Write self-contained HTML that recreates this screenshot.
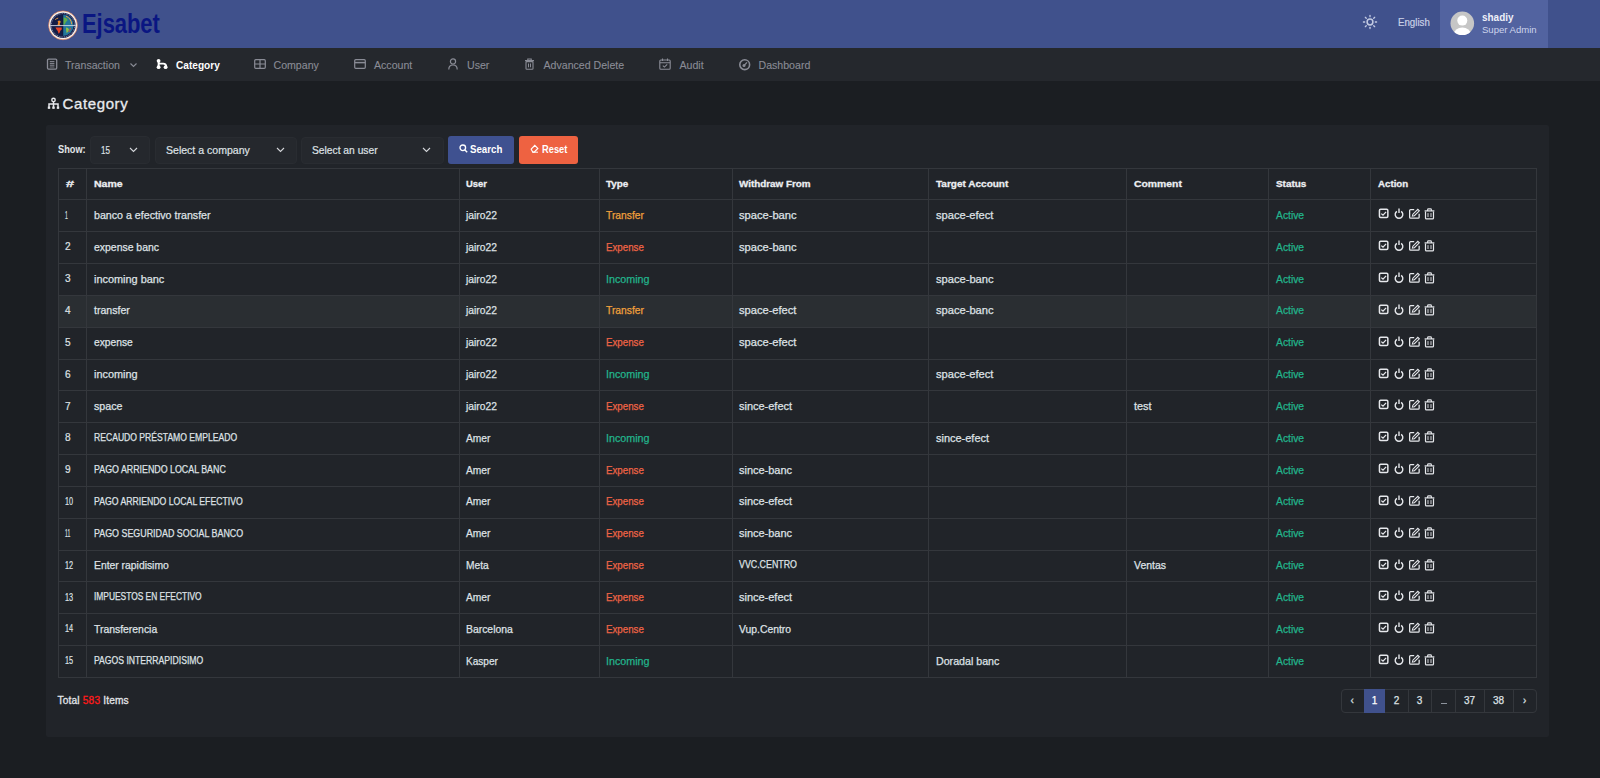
<!DOCTYPE html>
<html><head><meta charset="utf-8">
<style>
*{margin:0;padding:0;box-sizing:border-box}
html,body{width:1600px;height:778px;overflow:hidden;background:#1b1e22;font-family:"Liberation Sans",sans-serif;position:relative}
.t{position:absolute;white-space:nowrap}
.r{position:absolute;display:block}
</style></head><body>
<div class="r" style="left:0px;top:0px;width:1600px;height:48px;background:#40518c;"></div>
<div class="r" style="left:1440px;top:0px;width:108px;height:48px;background:#5263a0;"></div>
<div class="r" style="left:0px;top:48px;width:1600px;height:33px;background:#25282d;"></div>
<svg class="r" style="left:48px;top:10px" width="30" height="31" viewBox="0 0 30 31" overflow="visible">
<circle cx="15" cy="15.3" r="14.4" fill="#f6f1ee"/>
<circle cx="15" cy="15.3" r="14.45" fill="none" stroke="#e07040" stroke-width="0.6"/>
<circle cx="15" cy="15.3" r="12.6" fill="#17204c"/>
<circle cx="15" cy="15.3" r="11.7" fill="none" stroke="#c8cde0" stroke-width="0.7" stroke-dasharray="0.9 0.9"/>
<path d="M15 4.7A10.6 10.6 0 0 0 15 25.9Z" fill="#141d45"/>
<path d="M15 4.7A10.6 10.6 0 0 1 15 25.9Z" fill="#23769c"/>
<path d="M15.4 7.5q2.5 -0.5 4 1.5q0.5 2 -1.5 3q-0.5 2 -2.5 3.5z" fill="#5fae4a"/>
<path d="M18 17.5q2.5 0 3 2q-0.5 2.5 -2.5 3.5q-0.5 -2.5 -0.5 -5.5z" fill="#8cc04a"/>
<path d="M18 6.2q5 1.8 5.8 8.2" fill="none" stroke="#f0a040" stroke-width="1"/>
<path d="M22.5 18q-0.5 2.5 -1.8 4" fill="none" stroke="#e84a2a" stroke-width="0.9"/>
<path d="M9.6 11.5q1.2 -1.6 2.8 -0.6q0.8 1.2 -0.4 2.2q-1 1 0.4 2.2l-2.6 0.3q-0.6 -1.6 0.5 -2.6z" fill="#f08a2a"/>
<path d="M7.2 9.6q1.5 -1.2 3 -1.5" fill="none" stroke="#f09a3a" stroke-width="0.9"/>
<path d="M7.5 17.5h6.2v2q-1.5 0.5 -1.8 2.5q-0.5 1.5 -1.5 1.5q-0.2 -2 -1 -3q-1.4 -1.4 -1.9 -3z" fill="#e8452a"/>
<line x1="14.9" y1="4.7" x2="14.9" y2="25.9" stroke="#10183a" stroke-width="0.6"/>
<line x1="2.2" y1="15.6" x2="27.8" y2="15.6" stroke="#d6dae6" stroke-width="0.9"/>
</svg>
<div class="t" style="left:81.5px;top:6.5px;font-size:27px;line-height:34px;color:#0a1682;font-weight:bold;transform:scaleX(0.815);transform-origin:0 0;letter-spacing:-0.1px">Ejsabet</div>
<svg class="r" style="left:1361.7px;top:14.2px" width="16" height="16" viewBox="0 0 16 16" overflow="visible"><circle cx="8" cy="8" r="2.9" fill="none" stroke="#c3cbe3" stroke-width="1.5"/><line x1="13.30" y1="8.00" x2="14.60" y2="8.00" stroke="#c3cbe3" stroke-width="1.3" stroke-linecap="round"/><line x1="11.75" y1="11.75" x2="12.67" y2="12.67" stroke="#c3cbe3" stroke-width="1.3" stroke-linecap="round"/><line x1="8.00" y1="13.30" x2="8.00" y2="14.60" stroke="#c3cbe3" stroke-width="1.3" stroke-linecap="round"/><line x1="4.25" y1="11.75" x2="3.33" y2="12.67" stroke="#c3cbe3" stroke-width="1.3" stroke-linecap="round"/><line x1="2.70" y1="8.00" x2="1.40" y2="8.00" stroke="#c3cbe3" stroke-width="1.3" stroke-linecap="round"/><line x1="4.25" y1="4.25" x2="3.33" y2="3.33" stroke="#c3cbe3" stroke-width="1.3" stroke-linecap="round"/><line x1="8.00" y1="2.70" x2="8.00" y2="1.40" stroke="#c3cbe3" stroke-width="1.3" stroke-linecap="round"/><line x1="11.75" y1="4.25" x2="12.67" y2="3.33" stroke="#c3cbe3" stroke-width="1.3" stroke-linecap="round"/></svg>
<div class="t" style="left:1397.9px;top:16.73px;font-size:10px;line-height:12px;color:#c9d0e6;font-weight:normal;transform:scaleX(0.9695);transform-origin:0 0;-webkit-text-stroke:0.2px #c9d0e6">English</div>
<svg class="r" style="left:1450px;top:11px" width="25" height="25" viewBox="0 0 25 25" overflow="visible"><defs><clipPath id="av"><circle cx="12.3" cy="12.3" r="11.8"/></clipPath></defs>
<circle cx="12.3" cy="12.3" r="11.8" fill="#c6c6c6"/>
<g clip-path="url(#av)"><circle cx="12.3" cy="9.6" r="5" fill="#fff"/><ellipse cx="12.3" cy="23.5" rx="8.5" ry="7" fill="#fff"/></g></svg>
<div class="t" style="left:1482.4px;top:11.54px;font-size:10px;line-height:12px;color:#eef0f8;font-weight:bold;transform:scaleX(0.9943);transform-origin:0 0;">shadiy</div>
<div class="t" style="left:1482.4px;top:23.78px;font-size:9.3px;line-height:12px;color:#cdd4ec;font-weight:normal;transform:scaleX(1.0272);transform-origin:0 0;">Super Admin</div>
<svg class="r" style="left:46px;top:58px" width="12" height="12" viewBox="0 0 12 12" overflow="visible"><rect x="1.5" y="1.1" width="9.2" height="10" rx="1" fill="none" stroke="#8a8c96" stroke-width="1.3"/><path d="M3.8 3.6h4.6M3.8 5.4h4.6M3.8 7.2h4.6" stroke="#8a8c96" stroke-width="1"/><path d="M3.8 9h4.6" stroke="#8a8c96" stroke-width="0.8"/></svg>
<div class="t" style="left:65px;top:59.23px;font-size:10.6px;line-height:13px;color:#8a8c96;font-weight:normal;-webkit-text-stroke:0.1px #8a8c96">Transaction</div>
<svg class="r" style="left:129px;top:62px" width="9" height="6" viewBox="0 0 9 6" overflow="visible"><path d="M1.5 1.5l3 3 3-3" fill="none" stroke="#8a8c96" stroke-width="1.1"/></svg>
<svg class="r" style="left:155px;top:58px" width="14" height="12" viewBox="0 0 14 12" overflow="visible"><circle cx="3.6" cy="2.8" r="1.9" fill="#fff"/><circle cx="3.6" cy="9.2" r="1.9" fill="#fff"/><circle cx="10.6" cy="9.2" r="1.9" fill="#fff"/><path d="M3.6 2.8v6.4M3.6 5.6h4.6q3 0 3 3v0.6" fill="none" stroke="#fff" stroke-width="1.9"/></svg>
<div class="t" style="left:176px;top:59.40px;font-size:10.1px;line-height:13px;color:#ffffff;font-weight:bold;">Category</div>
<svg class="r" style="left:254px;top:59px" width="12" height="10" viewBox="0 0 12 10" overflow="visible"><rect x="0.7" y="0.7" width="10.6" height="8.6" rx="1" fill="none" stroke="#8a8c96" stroke-width="1.2"/><path d="M6 0.7v8.6M0.7 5h10.6" stroke="#8a8c96" stroke-width="1.2"/></svg>
<div class="t" style="left:273.5px;top:59.23px;font-size:10.6px;line-height:13px;color:#8a8c96;font-weight:normal;-webkit-text-stroke:0.1px #8a8c96">Company</div>
<svg class="r" style="left:354px;top:59px" width="12" height="10" viewBox="0 0 12 10" overflow="visible"><rect x="0.7" y="0.7" width="10.6" height="8.6" rx="1" fill="none" stroke="#8a8c96" stroke-width="1.2"/><path d="M0.7 3.6h10.6" stroke="#8a8c96" stroke-width="1.5"/></svg>
<div class="t" style="left:374px;top:59.23px;font-size:10.6px;line-height:13px;color:#8a8c96;font-weight:normal;-webkit-text-stroke:0.1px #8a8c96">Account</div>
<svg class="r" style="left:448px;top:58px" width="10" height="12" viewBox="0 0 10 12" overflow="visible"><circle cx="5" cy="3.4" r="2.6" fill="none" stroke="#8a8c96" stroke-width="1.2"/><path d="M0.8 11.4q0-4.4 4.2-4.4t4.2 4.4" fill="none" stroke="#8a8c96" stroke-width="1.2"/></svg>
<div class="t" style="left:467px;top:59.23px;font-size:10.6px;line-height:13px;color:#8a8c96;font-weight:normal;-webkit-text-stroke:0.1px #8a8c96">User</div>
<svg class="r" style="left:524px;top:58px" width="11" height="12" viewBox="0 0 11 12" overflow="visible"><path d="M1 2.6h9M3.8 2.6v-1.6h3.4v1.6" fill="none" stroke="#8a8c96" stroke-width="1.1"/><rect x="2" y="3.6" width="7" height="7.6" rx="0.8" fill="none" stroke="#8a8c96" stroke-width="1.1"/><path d="M4.5 5.5v3.8M6.5 5.5v3.8" stroke="#8a8c96" stroke-width="1"/></svg>
<div class="t" style="left:543.5px;top:59.23px;font-size:10.6px;line-height:13px;color:#8a8c96;font-weight:normal;-webkit-text-stroke:0.1px #8a8c96">Advanced Delete</div>
<svg class="r" style="left:659px;top:58px" width="12" height="12" viewBox="0 0 12 12" overflow="visible"><rect x="0.8" y="2" width="10.4" height="9.2" rx="1" fill="none" stroke="#8a8c96" stroke-width="1.1"/><path d="M0.8 4.8h10.4M3.5 0.5v2.6M8.5 0.5v2.6" stroke="#8a8c96" stroke-width="1.1"/><path d="M3.8 7.6l1.6 1.5 2.8-2.8" fill="none" stroke="#8a8c96" stroke-width="1.1"/></svg>
<div class="t" style="left:679.5px;top:59.23px;font-size:10.6px;line-height:13px;color:#8a8c96;font-weight:normal;-webkit-text-stroke:0.1px #8a8c96">Audit</div>
<svg class="r" style="left:738.5px;top:58.5px" width="12" height="12" viewBox="0 0 12 12" overflow="visible"><circle cx="5.7" cy="5.7" r="4.9" fill="none" stroke="#8a8c96" stroke-width="1.6"/><circle cx="5" cy="6.6" r="1.5" fill="#8a8c96"/><path d="M5.2 6.4l2.8-3" stroke="#8a8c96" stroke-width="1.3"/></svg>
<div class="t" style="left:758.5px;top:59.23px;font-size:10.6px;line-height:13px;color:#8a8c96;font-weight:normal;-webkit-text-stroke:0.1px #8a8c96">Dashboard</div>
<svg class="r" style="left:47px;top:96px" width="13" height="14" viewBox="0 0 13 14" overflow="visible"><circle cx="6.5" cy="3.9" r="1.7" fill="none" stroke="#e6e8ec" stroke-width="1.4"/><path d="M6.5 5.6v2M2 12.4v-4.5h9v4.5M6.5 7.9v4.5" fill="none" stroke="#e6e8ec" stroke-width="1.5"/><rect x="0.8" y="10.6" width="2.4" height="2.2" fill="#e6e8ec"/><rect x="5.3" y="10.6" width="2.4" height="2.2" fill="#e6e8ec"/><rect x="9.8" y="10.6" width="2.4" height="2.2" fill="#e6e8ec"/></svg>
<div class="t" style="left:62.5px;top:94.20px;font-size:15px;line-height:19px;color:#e8eaee;font-weight:normal;letter-spacing:0.62px;-webkit-text-stroke:0.3px #e8eaee">Category</div>
<div class="r" style="left:46px;top:125px;width:1503px;height:612px;background:#212429;border-radius:2px"></div>
<div class="t" style="left:57.8px;top:144.13px;font-size:10px;line-height:12px;color:#e2e4e8;font-weight:bold;transform:scaleX(0.9200);transform-origin:0 0;">Show:</div>
<div class="r" style="left:90px;top:136px;width:59.5px;height:27.5px;background:#25282d;border-radius:4px;border:1px solid #292c31;box-sizing:border-box"></div>
<div class="t" style="left:100.9px;top:142.79px;font-size:11px;line-height:14px;color:#dfe1e5;font-weight:normal;transform:scaleX(0.7276);transform-origin:0 0;-webkit-text-stroke:0.2px #dfe1e5">15</div>
<svg class="r" style="left:129px;top:147px" width="9" height="6" viewBox="0 0 9 6" overflow="visible"><path d="M1 1l3.5 3.5 3.5-3.5" fill="none" stroke="#d4d6da" stroke-width="1.1"/></svg>
<div class="r" style="left:155px;top:137px;width:142px;height:26.5px;background:#25282d;border-radius:4px;border:1px solid #292c31;box-sizing:border-box"></div>
<div class="t" style="left:165.7px;top:142.79px;font-size:11px;line-height:14px;color:#dfe1e5;font-weight:normal;transform:scaleX(0.9584);transform-origin:0 0;-webkit-text-stroke:0.2px #dfe1e5">Select a company</div>
<svg class="r" style="left:276px;top:147px" width="9" height="6" viewBox="0 0 9 6" overflow="visible"><path d="M1 1l3.5 3.5 3.5-3.5" fill="none" stroke="#d4d6da" stroke-width="1.1"/></svg>
<div class="r" style="left:301px;top:137px;width:143px;height:26.5px;background:#25282d;border-radius:4px;border:1px solid #292c31;box-sizing:border-box"></div>
<div class="t" style="left:312.2px;top:142.79px;font-size:11px;line-height:14px;color:#dfe1e5;font-weight:normal;transform:scaleX(0.9328);transform-origin:0 0;-webkit-text-stroke:0.2px #dfe1e5">Select an user</div>
<svg class="r" style="left:421.5px;top:147px" width="9" height="6" viewBox="0 0 9 6" overflow="visible"><path d="M1 1l3.5 3.5 3.5-3.5" fill="none" stroke="#d4d6da" stroke-width="1.1"/></svg>
<div class="r" style="left:448px;top:136px;width:66px;height:27.5px;background:#3f5190;border-radius:3px"></div>
<svg class="r" style="left:458.5px;top:143.5px" width="9" height="9" viewBox="0 0 9 9" overflow="visible"><circle cx="3.8" cy="3.8" r="2.8" fill="none" stroke="#fff" stroke-width="1.3"/><path d="M5.9 5.9l2.3 2.3" stroke="#fff" stroke-width="1.4"/></svg>
<div class="t" style="left:469.9px;top:144.13px;font-size:10px;line-height:12px;color:#ffffff;font-weight:bold;transform:scaleX(0.9685);transform-origin:0 0;">Search</div>
<div class="r" style="left:519px;top:136px;width:59px;height:27.5px;background:#ee6241;border-radius:3px"></div>
<svg class="r" style="left:530px;top:143.5px" width="9" height="9" viewBox="0 0 9 9" overflow="visible"><path d="M1.2 5.2l3.6-3.8l3 3l-3.6 3.8h-1.4z" fill="none" stroke="#fff" stroke-width="1.2"/><path d="M2.5 8.2h5.5" stroke="#fff" stroke-width="1"/></svg>
<div class="t" style="left:541.5px;top:144.13px;font-size:10px;line-height:12px;color:#ffffff;font-weight:bold;transform:scaleX(0.9325);transform-origin:0 0;">Reset</div>
<div class="r" style="left:58px;top:295px;width:1478px;height:32px;background:#2a2e32;"></div>
<div class="r" style="left:58px;top:168px;width:1479px;height:1px;background:#34373c;"></div>
<div class="r" style="left:58px;top:199px;width:1479px;height:1px;background:#34373c;"></div>
<div class="r" style="left:58px;top:231px;width:1479px;height:1px;background:#34373c;"></div>
<div class="r" style="left:58px;top:263px;width:1479px;height:1px;background:#34373c;"></div>
<div class="r" style="left:58px;top:295px;width:1479px;height:1px;background:#34373c;"></div>
<div class="r" style="left:58px;top:327px;width:1479px;height:1px;background:#34373c;"></div>
<div class="r" style="left:58px;top:359px;width:1479px;height:1px;background:#34373c;"></div>
<div class="r" style="left:58px;top:390px;width:1479px;height:1px;background:#34373c;"></div>
<div class="r" style="left:58px;top:422px;width:1479px;height:1px;background:#34373c;"></div>
<div class="r" style="left:58px;top:454px;width:1479px;height:1px;background:#34373c;"></div>
<div class="r" style="left:58px;top:486px;width:1479px;height:1px;background:#34373c;"></div>
<div class="r" style="left:58px;top:518px;width:1479px;height:1px;background:#34373c;"></div>
<div class="r" style="left:58px;top:550px;width:1479px;height:1px;background:#34373c;"></div>
<div class="r" style="left:58px;top:581px;width:1479px;height:1px;background:#34373c;"></div>
<div class="r" style="left:58px;top:613px;width:1479px;height:1px;background:#34373c;"></div>
<div class="r" style="left:58px;top:645px;width:1479px;height:1px;background:#34373c;"></div>
<div class="r" style="left:58px;top:677px;width:1479px;height:1px;background:#34373c;"></div>
<div class="r" style="left:58px;top:168px;width:1px;height:510px;background:#34373c;"></div>
<div class="r" style="left:86px;top:168px;width:1px;height:510px;background:#34373c;"></div>
<div class="r" style="left:459px;top:168px;width:1px;height:510px;background:#34373c;"></div>
<div class="r" style="left:599px;top:168px;width:1px;height:510px;background:#34373c;"></div>
<div class="r" style="left:732px;top:168px;width:1px;height:510px;background:#34373c;"></div>
<div class="r" style="left:928px;top:168px;width:1px;height:510px;background:#34373c;"></div>
<div class="r" style="left:1126px;top:168px;width:1px;height:510px;background:#34373c;"></div>
<div class="r" style="left:1268px;top:168px;width:1px;height:510px;background:#34373c;"></div>
<div class="r" style="left:1370px;top:168px;width:1px;height:510px;background:#34373c;"></div>
<div class="r" style="left:1536px;top:168px;width:1px;height:510px;background:#34373c;"></div>
<div class="t" style="left:65.5px;top:177.57px;font-size:9.9px;line-height:12px;color:#eceef2;font-weight:bold;transform:scaleX(1.4716);transform-origin:0 0;-webkit-text-stroke:0.3px #eceef2">#</div>
<div class="t" style="left:93.9px;top:177.57px;font-size:9.9px;line-height:12px;color:#eceef2;font-weight:bold;transform:scaleX(1.0661);transform-origin:0 0;-webkit-text-stroke:0.3px #eceef2">Name</div>
<div class="t" style="left:466.4px;top:177.57px;font-size:9.9px;line-height:12px;color:#eceef2;font-weight:bold;transform:scaleX(0.9538);transform-origin:0 0;-webkit-text-stroke:0.3px #eceef2">User</div>
<div class="t" style="left:606.4px;top:177.57px;font-size:9.9px;line-height:12px;color:#eceef2;font-weight:bold;transform:scaleX(1.0012);transform-origin:0 0;-webkit-text-stroke:0.3px #eceef2">Type</div>
<div class="t" style="left:739.2px;top:177.57px;font-size:9.9px;line-height:12px;color:#eceef2;font-weight:bold;transform:scaleX(0.9977);transform-origin:0 0;-webkit-text-stroke:0.3px #eceef2">Withdraw From</div>
<div class="t" style="left:936.0px;top:177.57px;font-size:9.9px;line-height:12px;color:#eceef2;font-weight:bold;transform:scaleX(1.0139);transform-origin:0 0;-webkit-text-stroke:0.3px #eceef2">Target Account</div>
<div class="t" style="left:1134.0px;top:177.57px;font-size:9.9px;line-height:12px;color:#eceef2;font-weight:bold;transform:scaleX(1.0515);transform-origin:0 0;-webkit-text-stroke:0.3px #eceef2">Comment</div>
<div class="t" style="left:1275.6px;top:177.57px;font-size:9.9px;line-height:12px;color:#eceef2;font-weight:bold;transform:scaleX(1.0048);transform-origin:0 0;-webkit-text-stroke:0.3px #eceef2">Status</div>
<div class="t" style="left:1377.5px;top:177.57px;font-size:9.9px;line-height:12px;color:#eceef2;font-weight:bold;transform:scaleX(0.9822);transform-origin:0 0;-webkit-text-stroke:0.3px #eceef2">Action</div>
<div class="t" style="left:65.4px;top:208.66px;font-size:10.5px;line-height:13px;color:#dfe1e5;font-weight:normal;transform:scaleX(0.4796);transform-origin:0 0;-webkit-text-stroke:0.2px #dfe1e5">1</div>
<div class="t" style="left:94.2px;top:207.99px;font-size:11px;line-height:14px;color:#dfe1e5;font-weight:normal;transform:scaleX(0.9679);transform-origin:0 0;-webkit-text-stroke:0.25px #dfe1e5">banco a efectivo transfer</div>
<div class="t" style="left:466.45685497191937px;top:207.99px;font-size:11px;line-height:14px;color:#dfe1e5;font-weight:normal;transform:scaleX(0.9340);transform-origin:0 0;-webkit-text-stroke:0.25px #dfe1e5">jairo22</div>
<div class="t" style="left:606.3px;top:207.99px;font-size:11px;line-height:14px;color:#f0a03c;font-weight:normal;transform:scaleX(0.9347);transform-origin:0 0;-webkit-text-stroke:0.25px #f0a03c">Transfer</div>
<div class="t" style="left:738.9px;top:207.99px;font-size:11px;line-height:14px;color:#dfe1e5;font-weight:normal;transform:scaleX(1.0111);transform-origin:0 0;-webkit-text-stroke:0.25px #dfe1e5">space-banc</div>
<div class="t" style="left:936.0px;top:207.99px;font-size:11px;line-height:14px;color:#dfe1e5;font-weight:normal;transform:scaleX(1.0095);transform-origin:0 0;-webkit-text-stroke:0.25px #dfe1e5">space-efect</div>
<div class="t" style="left:1275.6px;top:207.99px;font-size:11px;line-height:14px;color:#22b48c;font-weight:normal;transform:scaleX(0.9381);transform-origin:0 0;-webkit-text-stroke:0.25px #22b48c">Active</div>
<svg class="r" style="left:1378px;top:208.4px" width="60" height="13" viewBox="0 0 60 13" overflow="visible"><rect x="1.45" y="1.2" width="8.4" height="8.2" rx="1.2" fill="none" stroke="#e6e8ec" stroke-width="1.5"/>
<path d="M3.3 5.6l1.7 1.6 3.1-3.3" fill="none" stroke="#e6e8ec" stroke-width="1.3"/>
<path d="M18.9 3.3A3.8 3.8 0 1 0 23.1 3.3" fill="none" stroke="#e6e8ec" stroke-width="1.4"/><path d="M21 0.6V5.1" stroke="#e6e8ec" stroke-width="1.4"/>
<path d="M36.2 1.65H32.6Q31.65 1.65 31.65 2.6V9.25Q31.65 10.2 32.6 10.2H40.2Q41.15 10.2 41.15 9.25V5.8" fill="none" stroke="#e6e8ec" stroke-width="1.3"/>
<path d="M34.4 8.1L34.9 6.2L39.8 1.3L41.3 2.8L36.4 7.7Z" fill="none" stroke="#e6e8ec" stroke-width="1.1"/>
<path d="M46.6 2.9H56.35" stroke="#e6e8ec" stroke-width="1.2"/><path d="M49.6 2.9V1.8Q49.6 0.9 50.5 0.9H52.5Q53.4 0.9 53.4 1.8V2.9" fill="none" stroke="#e6e8ec" stroke-width="1.1"/>
<path d="M47.5 3.4V9.9Q47.5 10.9 48.5 10.9H54.5Q55.5 10.9 55.5 9.9V3.4" fill="none" stroke="#e6e8ec" stroke-width="1.2"/><path d="M50 5.1V9M53 5.1V9" stroke="#e6e8ec" stroke-width="0.9"/></svg>
<div class="t" style="left:65.4px;top:240.49px;font-size:10.5px;line-height:13px;color:#dfe1e5;font-weight:normal;transform:scaleX(0.9592);transform-origin:0 0;-webkit-text-stroke:0.2px #dfe1e5">2</div>
<div class="t" style="left:94.2px;top:239.82px;font-size:11px;line-height:14px;color:#dfe1e5;font-weight:normal;transform:scaleX(0.9489);transform-origin:0 0;-webkit-text-stroke:0.25px #dfe1e5">expense banc</div>
<div class="t" style="left:466.45685497191937px;top:239.82px;font-size:11px;line-height:14px;color:#dfe1e5;font-weight:normal;transform:scaleX(0.9340);transform-origin:0 0;-webkit-text-stroke:0.25px #dfe1e5">jairo22</div>
<div class="t" style="left:606.3px;top:239.82px;font-size:11px;line-height:14px;color:#ef6446;font-weight:normal;transform:scaleX(0.8853);transform-origin:0 0;-webkit-text-stroke:0.25px #ef6446">Expense</div>
<div class="t" style="left:738.9px;top:239.82px;font-size:11px;line-height:14px;color:#dfe1e5;font-weight:normal;transform:scaleX(1.0111);transform-origin:0 0;-webkit-text-stroke:0.25px #dfe1e5">space-banc</div>
<div class="t" style="left:1275.6px;top:239.82px;font-size:11px;line-height:14px;color:#22b48c;font-weight:normal;transform:scaleX(0.9381);transform-origin:0 0;-webkit-text-stroke:0.25px #22b48c">Active</div>
<svg class="r" style="left:1378px;top:240.23px" width="60" height="13" viewBox="0 0 60 13" overflow="visible"><rect x="1.45" y="1.2" width="8.4" height="8.2" rx="1.2" fill="none" stroke="#e6e8ec" stroke-width="1.5"/>
<path d="M3.3 5.6l1.7 1.6 3.1-3.3" fill="none" stroke="#e6e8ec" stroke-width="1.3"/>
<path d="M18.9 3.3A3.8 3.8 0 1 0 23.1 3.3" fill="none" stroke="#e6e8ec" stroke-width="1.4"/><path d="M21 0.6V5.1" stroke="#e6e8ec" stroke-width="1.4"/>
<path d="M36.2 1.65H32.6Q31.65 1.65 31.65 2.6V9.25Q31.65 10.2 32.6 10.2H40.2Q41.15 10.2 41.15 9.25V5.8" fill="none" stroke="#e6e8ec" stroke-width="1.3"/>
<path d="M34.4 8.1L34.9 6.2L39.8 1.3L41.3 2.8L36.4 7.7Z" fill="none" stroke="#e6e8ec" stroke-width="1.1"/>
<path d="M46.6 2.9H56.35" stroke="#e6e8ec" stroke-width="1.2"/><path d="M49.6 2.9V1.8Q49.6 0.9 50.5 0.9H52.5Q53.4 0.9 53.4 1.8V2.9" fill="none" stroke="#e6e8ec" stroke-width="1.1"/>
<path d="M47.5 3.4V9.9Q47.5 10.9 48.5 10.9H54.5Q55.5 10.9 55.5 9.9V3.4" fill="none" stroke="#e6e8ec" stroke-width="1.2"/><path d="M50 5.1V9M53 5.1V9" stroke="#e6e8ec" stroke-width="0.9"/></svg>
<div class="t" style="left:65.4px;top:272.32px;font-size:10.5px;line-height:13px;color:#dfe1e5;font-weight:normal;transform:scaleX(0.9592);transform-origin:0 0;-webkit-text-stroke:0.2px #dfe1e5">3</div>
<div class="t" style="left:94.2px;top:271.65px;font-size:11px;line-height:14px;color:#dfe1e5;font-weight:normal;transform:scaleX(0.9911);transform-origin:0 0;-webkit-text-stroke:0.25px #dfe1e5">incoming banc</div>
<div class="t" style="left:466.45685497191937px;top:271.65px;font-size:11px;line-height:14px;color:#dfe1e5;font-weight:normal;transform:scaleX(0.9340);transform-origin:0 0;-webkit-text-stroke:0.25px #dfe1e5">jairo22</div>
<div class="t" style="left:606.3px;top:271.65px;font-size:11px;line-height:14px;color:#22b48c;font-weight:normal;transform:scaleX(0.9745);transform-origin:0 0;-webkit-text-stroke:0.25px #22b48c">Incoming</div>
<div class="t" style="left:936.0px;top:271.65px;font-size:11px;line-height:14px;color:#dfe1e5;font-weight:normal;transform:scaleX(1.0111);transform-origin:0 0;-webkit-text-stroke:0.25px #dfe1e5">space-banc</div>
<div class="t" style="left:1275.6px;top:271.65px;font-size:11px;line-height:14px;color:#22b48c;font-weight:normal;transform:scaleX(0.9381);transform-origin:0 0;-webkit-text-stroke:0.25px #22b48c">Active</div>
<svg class="r" style="left:1378px;top:272.06px" width="60" height="13" viewBox="0 0 60 13" overflow="visible"><rect x="1.45" y="1.2" width="8.4" height="8.2" rx="1.2" fill="none" stroke="#e6e8ec" stroke-width="1.5"/>
<path d="M3.3 5.6l1.7 1.6 3.1-3.3" fill="none" stroke="#e6e8ec" stroke-width="1.3"/>
<path d="M18.9 3.3A3.8 3.8 0 1 0 23.1 3.3" fill="none" stroke="#e6e8ec" stroke-width="1.4"/><path d="M21 0.6V5.1" stroke="#e6e8ec" stroke-width="1.4"/>
<path d="M36.2 1.65H32.6Q31.65 1.65 31.65 2.6V9.25Q31.65 10.2 32.6 10.2H40.2Q41.15 10.2 41.15 9.25V5.8" fill="none" stroke="#e6e8ec" stroke-width="1.3"/>
<path d="M34.4 8.1L34.9 6.2L39.8 1.3L41.3 2.8L36.4 7.7Z" fill="none" stroke="#e6e8ec" stroke-width="1.1"/>
<path d="M46.6 2.9H56.35" stroke="#e6e8ec" stroke-width="1.2"/><path d="M49.6 2.9V1.8Q49.6 0.9 50.5 0.9H52.5Q53.4 0.9 53.4 1.8V2.9" fill="none" stroke="#e6e8ec" stroke-width="1.1"/>
<path d="M47.5 3.4V9.9Q47.5 10.9 48.5 10.9H54.5Q55.5 10.9 55.5 9.9V3.4" fill="none" stroke="#e6e8ec" stroke-width="1.2"/><path d="M50 5.1V9M53 5.1V9" stroke="#e6e8ec" stroke-width="0.9"/></svg>
<div class="t" style="left:65.4px;top:304.15px;font-size:10.5px;line-height:13px;color:#dfe1e5;font-weight:normal;transform:scaleX(0.9592);transform-origin:0 0;-webkit-text-stroke:0.2px #dfe1e5">4</div>
<div class="t" style="left:94.2px;top:303.48px;font-size:11px;line-height:14px;color:#dfe1e5;font-weight:normal;transform:scaleX(0.9600);transform-origin:0 0;-webkit-text-stroke:0.25px #dfe1e5">transfer</div>
<div class="t" style="left:466.45685497191937px;top:303.48px;font-size:11px;line-height:14px;color:#dfe1e5;font-weight:normal;transform:scaleX(0.9340);transform-origin:0 0;-webkit-text-stroke:0.25px #dfe1e5">jairo22</div>
<div class="t" style="left:606.3px;top:303.48px;font-size:11px;line-height:14px;color:#f0a03c;font-weight:normal;transform:scaleX(0.9347);transform-origin:0 0;-webkit-text-stroke:0.25px #f0a03c">Transfer</div>
<div class="t" style="left:738.9px;top:303.48px;font-size:11px;line-height:14px;color:#dfe1e5;font-weight:normal;transform:scaleX(1.0095);transform-origin:0 0;-webkit-text-stroke:0.25px #dfe1e5">space-efect</div>
<div class="t" style="left:936.0px;top:303.48px;font-size:11px;line-height:14px;color:#dfe1e5;font-weight:normal;transform:scaleX(1.0111);transform-origin:0 0;-webkit-text-stroke:0.25px #dfe1e5">space-banc</div>
<div class="t" style="left:1275.6px;top:303.48px;font-size:11px;line-height:14px;color:#22b48c;font-weight:normal;transform:scaleX(0.9381);transform-origin:0 0;-webkit-text-stroke:0.25px #22b48c">Active</div>
<svg class="r" style="left:1378px;top:303.89px" width="60" height="13" viewBox="0 0 60 13" overflow="visible"><rect x="1.45" y="1.2" width="8.4" height="8.2" rx="1.2" fill="none" stroke="#e6e8ec" stroke-width="1.5"/>
<path d="M3.3 5.6l1.7 1.6 3.1-3.3" fill="none" stroke="#e6e8ec" stroke-width="1.3"/>
<path d="M18.9 3.3A3.8 3.8 0 1 0 23.1 3.3" fill="none" stroke="#e6e8ec" stroke-width="1.4"/><path d="M21 0.6V5.1" stroke="#e6e8ec" stroke-width="1.4"/>
<path d="M36.2 1.65H32.6Q31.65 1.65 31.65 2.6V9.25Q31.65 10.2 32.6 10.2H40.2Q41.15 10.2 41.15 9.25V5.8" fill="none" stroke="#e6e8ec" stroke-width="1.3"/>
<path d="M34.4 8.1L34.9 6.2L39.8 1.3L41.3 2.8L36.4 7.7Z" fill="none" stroke="#e6e8ec" stroke-width="1.1"/>
<path d="M46.6 2.9H56.35" stroke="#e6e8ec" stroke-width="1.2"/><path d="M49.6 2.9V1.8Q49.6 0.9 50.5 0.9H52.5Q53.4 0.9 53.4 1.8V2.9" fill="none" stroke="#e6e8ec" stroke-width="1.1"/>
<path d="M47.5 3.4V9.9Q47.5 10.9 48.5 10.9H54.5Q55.5 10.9 55.5 9.9V3.4" fill="none" stroke="#e6e8ec" stroke-width="1.2"/><path d="M50 5.1V9M53 5.1V9" stroke="#e6e8ec" stroke-width="0.9"/></svg>
<div class="t" style="left:65.4px;top:335.98px;font-size:10.5px;line-height:13px;color:#dfe1e5;font-weight:normal;transform:scaleX(0.9592);transform-origin:0 0;-webkit-text-stroke:0.2px #dfe1e5">5</div>
<div class="t" style="left:94.2px;top:335.31px;font-size:11px;line-height:14px;color:#dfe1e5;font-weight:normal;transform:scaleX(0.9305);transform-origin:0 0;-webkit-text-stroke:0.25px #dfe1e5">expense</div>
<div class="t" style="left:466.45685497191937px;top:335.31px;font-size:11px;line-height:14px;color:#dfe1e5;font-weight:normal;transform:scaleX(0.9340);transform-origin:0 0;-webkit-text-stroke:0.25px #dfe1e5">jairo22</div>
<div class="t" style="left:606.3px;top:335.31px;font-size:11px;line-height:14px;color:#ef6446;font-weight:normal;transform:scaleX(0.8853);transform-origin:0 0;-webkit-text-stroke:0.25px #ef6446">Expense</div>
<div class="t" style="left:738.9px;top:335.31px;font-size:11px;line-height:14px;color:#dfe1e5;font-weight:normal;transform:scaleX(1.0095);transform-origin:0 0;-webkit-text-stroke:0.25px #dfe1e5">space-efect</div>
<div class="t" style="left:1275.6px;top:335.31px;font-size:11px;line-height:14px;color:#22b48c;font-weight:normal;transform:scaleX(0.9381);transform-origin:0 0;-webkit-text-stroke:0.25px #22b48c">Active</div>
<svg class="r" style="left:1378px;top:335.72px" width="60" height="13" viewBox="0 0 60 13" overflow="visible"><rect x="1.45" y="1.2" width="8.4" height="8.2" rx="1.2" fill="none" stroke="#e6e8ec" stroke-width="1.5"/>
<path d="M3.3 5.6l1.7 1.6 3.1-3.3" fill="none" stroke="#e6e8ec" stroke-width="1.3"/>
<path d="M18.9 3.3A3.8 3.8 0 1 0 23.1 3.3" fill="none" stroke="#e6e8ec" stroke-width="1.4"/><path d="M21 0.6V5.1" stroke="#e6e8ec" stroke-width="1.4"/>
<path d="M36.2 1.65H32.6Q31.65 1.65 31.65 2.6V9.25Q31.65 10.2 32.6 10.2H40.2Q41.15 10.2 41.15 9.25V5.8" fill="none" stroke="#e6e8ec" stroke-width="1.3"/>
<path d="M34.4 8.1L34.9 6.2L39.8 1.3L41.3 2.8L36.4 7.7Z" fill="none" stroke="#e6e8ec" stroke-width="1.1"/>
<path d="M46.6 2.9H56.35" stroke="#e6e8ec" stroke-width="1.2"/><path d="M49.6 2.9V1.8Q49.6 0.9 50.5 0.9H52.5Q53.4 0.9 53.4 1.8V2.9" fill="none" stroke="#e6e8ec" stroke-width="1.1"/>
<path d="M47.5 3.4V9.9Q47.5 10.9 48.5 10.9H54.5Q55.5 10.9 55.5 9.9V3.4" fill="none" stroke="#e6e8ec" stroke-width="1.2"/><path d="M50 5.1V9M53 5.1V9" stroke="#e6e8ec" stroke-width="0.9"/></svg>
<div class="t" style="left:65.4px;top:367.81px;font-size:10.5px;line-height:13px;color:#dfe1e5;font-weight:normal;transform:scaleX(0.9592);transform-origin:0 0;-webkit-text-stroke:0.2px #dfe1e5">6</div>
<div class="t" style="left:94.2px;top:367.14px;font-size:11px;line-height:14px;color:#dfe1e5;font-weight:normal;transform:scaleX(0.9881);transform-origin:0 0;-webkit-text-stroke:0.25px #dfe1e5">incoming</div>
<div class="t" style="left:466.45685497191937px;top:367.14px;font-size:11px;line-height:14px;color:#dfe1e5;font-weight:normal;transform:scaleX(0.9340);transform-origin:0 0;-webkit-text-stroke:0.25px #dfe1e5">jairo22</div>
<div class="t" style="left:606.3px;top:367.14px;font-size:11px;line-height:14px;color:#22b48c;font-weight:normal;transform:scaleX(0.9745);transform-origin:0 0;-webkit-text-stroke:0.25px #22b48c">Incoming</div>
<div class="t" style="left:936.0px;top:367.14px;font-size:11px;line-height:14px;color:#dfe1e5;font-weight:normal;transform:scaleX(1.0095);transform-origin:0 0;-webkit-text-stroke:0.25px #dfe1e5">space-efect</div>
<div class="t" style="left:1275.6px;top:367.14px;font-size:11px;line-height:14px;color:#22b48c;font-weight:normal;transform:scaleX(0.9381);transform-origin:0 0;-webkit-text-stroke:0.25px #22b48c">Active</div>
<svg class="r" style="left:1378px;top:367.55px" width="60" height="13" viewBox="0 0 60 13" overflow="visible"><rect x="1.45" y="1.2" width="8.4" height="8.2" rx="1.2" fill="none" stroke="#e6e8ec" stroke-width="1.5"/>
<path d="M3.3 5.6l1.7 1.6 3.1-3.3" fill="none" stroke="#e6e8ec" stroke-width="1.3"/>
<path d="M18.9 3.3A3.8 3.8 0 1 0 23.1 3.3" fill="none" stroke="#e6e8ec" stroke-width="1.4"/><path d="M21 0.6V5.1" stroke="#e6e8ec" stroke-width="1.4"/>
<path d="M36.2 1.65H32.6Q31.65 1.65 31.65 2.6V9.25Q31.65 10.2 32.6 10.2H40.2Q41.15 10.2 41.15 9.25V5.8" fill="none" stroke="#e6e8ec" stroke-width="1.3"/>
<path d="M34.4 8.1L34.9 6.2L39.8 1.3L41.3 2.8L36.4 7.7Z" fill="none" stroke="#e6e8ec" stroke-width="1.1"/>
<path d="M46.6 2.9H56.35" stroke="#e6e8ec" stroke-width="1.2"/><path d="M49.6 2.9V1.8Q49.6 0.9 50.5 0.9H52.5Q53.4 0.9 53.4 1.8V2.9" fill="none" stroke="#e6e8ec" stroke-width="1.1"/>
<path d="M47.5 3.4V9.9Q47.5 10.9 48.5 10.9H54.5Q55.5 10.9 55.5 9.9V3.4" fill="none" stroke="#e6e8ec" stroke-width="1.2"/><path d="M50 5.1V9M53 5.1V9" stroke="#e6e8ec" stroke-width="0.9"/></svg>
<div class="t" style="left:65.4px;top:399.64px;font-size:10.5px;line-height:13px;color:#dfe1e5;font-weight:normal;transform:scaleX(0.9592);transform-origin:0 0;-webkit-text-stroke:0.2px #dfe1e5">7</div>
<div class="t" style="left:94.2px;top:398.97px;font-size:11px;line-height:14px;color:#dfe1e5;font-weight:normal;transform:scaleX(0.9711);transform-origin:0 0;-webkit-text-stroke:0.25px #dfe1e5">space</div>
<div class="t" style="left:466.45685497191937px;top:398.97px;font-size:11px;line-height:14px;color:#dfe1e5;font-weight:normal;transform:scaleX(0.9340);transform-origin:0 0;-webkit-text-stroke:0.25px #dfe1e5">jairo22</div>
<div class="t" style="left:606.3px;top:398.97px;font-size:11px;line-height:14px;color:#ef6446;font-weight:normal;transform:scaleX(0.8853);transform-origin:0 0;-webkit-text-stroke:0.25px #ef6446">Expense</div>
<div class="t" style="left:738.9px;top:398.97px;font-size:11px;line-height:14px;color:#dfe1e5;font-weight:normal;transform:scaleX(0.9965);transform-origin:0 0;-webkit-text-stroke:0.25px #dfe1e5">since-efect</div>
<div class="t" style="left:1134.2px;top:398.97px;font-size:11px;line-height:14px;color:#dfe1e5;font-weight:normal;transform:scaleX(0.9869);transform-origin:0 0;-webkit-text-stroke:0.25px #dfe1e5">test</div>
<div class="t" style="left:1275.6px;top:398.97px;font-size:11px;line-height:14px;color:#22b48c;font-weight:normal;transform:scaleX(0.9381);transform-origin:0 0;-webkit-text-stroke:0.25px #22b48c">Active</div>
<svg class="r" style="left:1378px;top:399.38px" width="60" height="13" viewBox="0 0 60 13" overflow="visible"><rect x="1.45" y="1.2" width="8.4" height="8.2" rx="1.2" fill="none" stroke="#e6e8ec" stroke-width="1.5"/>
<path d="M3.3 5.6l1.7 1.6 3.1-3.3" fill="none" stroke="#e6e8ec" stroke-width="1.3"/>
<path d="M18.9 3.3A3.8 3.8 0 1 0 23.1 3.3" fill="none" stroke="#e6e8ec" stroke-width="1.4"/><path d="M21 0.6V5.1" stroke="#e6e8ec" stroke-width="1.4"/>
<path d="M36.2 1.65H32.6Q31.65 1.65 31.65 2.6V9.25Q31.65 10.2 32.6 10.2H40.2Q41.15 10.2 41.15 9.25V5.8" fill="none" stroke="#e6e8ec" stroke-width="1.3"/>
<path d="M34.4 8.1L34.9 6.2L39.8 1.3L41.3 2.8L36.4 7.7Z" fill="none" stroke="#e6e8ec" stroke-width="1.1"/>
<path d="M46.6 2.9H56.35" stroke="#e6e8ec" stroke-width="1.2"/><path d="M49.6 2.9V1.8Q49.6 0.9 50.5 0.9H52.5Q53.4 0.9 53.4 1.8V2.9" fill="none" stroke="#e6e8ec" stroke-width="1.1"/>
<path d="M47.5 3.4V9.9Q47.5 10.9 48.5 10.9H54.5Q55.5 10.9 55.5 9.9V3.4" fill="none" stroke="#e6e8ec" stroke-width="1.2"/><path d="M50 5.1V9M53 5.1V9" stroke="#e6e8ec" stroke-width="0.9"/></svg>
<div class="t" style="left:65.4px;top:431.47px;font-size:10.5px;line-height:13px;color:#dfe1e5;font-weight:normal;transform:scaleX(0.9592);transform-origin:0 0;-webkit-text-stroke:0.2px #dfe1e5">8</div>
<div class="t" style="left:94.2px;top:432.15px;font-size:10px;line-height:12px;color:#dfe1e5;font-weight:normal;transform:scaleX(0.8594);transform-origin:0 0;-webkit-text-stroke:0.25px #dfe1e5">RECAUDO PRÉSTAMO EMPLEADO</div>
<div class="t" style="left:466.2px;top:430.80px;font-size:11px;line-height:14px;color:#dfe1e5;font-weight:normal;transform:scaleX(0.9285);transform-origin:0 0;-webkit-text-stroke:0.25px #dfe1e5">Amer</div>
<div class="t" style="left:606.3px;top:430.80px;font-size:11px;line-height:14px;color:#22b48c;font-weight:normal;transform:scaleX(0.9745);transform-origin:0 0;-webkit-text-stroke:0.25px #22b48c">Incoming</div>
<div class="t" style="left:936.0px;top:430.80px;font-size:11px;line-height:14px;color:#dfe1e5;font-weight:normal;transform:scaleX(0.9965);transform-origin:0 0;-webkit-text-stroke:0.25px #dfe1e5">since-efect</div>
<div class="t" style="left:1275.6px;top:430.80px;font-size:11px;line-height:14px;color:#22b48c;font-weight:normal;transform:scaleX(0.9381);transform-origin:0 0;-webkit-text-stroke:0.25px #22b48c">Active</div>
<svg class="r" style="left:1378px;top:431.21px" width="60" height="13" viewBox="0 0 60 13" overflow="visible"><rect x="1.45" y="1.2" width="8.4" height="8.2" rx="1.2" fill="none" stroke="#e6e8ec" stroke-width="1.5"/>
<path d="M3.3 5.6l1.7 1.6 3.1-3.3" fill="none" stroke="#e6e8ec" stroke-width="1.3"/>
<path d="M18.9 3.3A3.8 3.8 0 1 0 23.1 3.3" fill="none" stroke="#e6e8ec" stroke-width="1.4"/><path d="M21 0.6V5.1" stroke="#e6e8ec" stroke-width="1.4"/>
<path d="M36.2 1.65H32.6Q31.65 1.65 31.65 2.6V9.25Q31.65 10.2 32.6 10.2H40.2Q41.15 10.2 41.15 9.25V5.8" fill="none" stroke="#e6e8ec" stroke-width="1.3"/>
<path d="M34.4 8.1L34.9 6.2L39.8 1.3L41.3 2.8L36.4 7.7Z" fill="none" stroke="#e6e8ec" stroke-width="1.1"/>
<path d="M46.6 2.9H56.35" stroke="#e6e8ec" stroke-width="1.2"/><path d="M49.6 2.9V1.8Q49.6 0.9 50.5 0.9H52.5Q53.4 0.9 53.4 1.8V2.9" fill="none" stroke="#e6e8ec" stroke-width="1.1"/>
<path d="M47.5 3.4V9.9Q47.5 10.9 48.5 10.9H54.5Q55.5 10.9 55.5 9.9V3.4" fill="none" stroke="#e6e8ec" stroke-width="1.2"/><path d="M50 5.1V9M53 5.1V9" stroke="#e6e8ec" stroke-width="0.9"/></svg>
<div class="t" style="left:65.4px;top:463.30px;font-size:10.5px;line-height:13px;color:#dfe1e5;font-weight:normal;transform:scaleX(0.9592);transform-origin:0 0;-webkit-text-stroke:0.2px #dfe1e5">9</div>
<div class="t" style="left:94.2px;top:463.97px;font-size:10px;line-height:12px;color:#dfe1e5;font-weight:normal;transform:scaleX(0.8850);transform-origin:0 0;-webkit-text-stroke:0.25px #dfe1e5">PAGO ARRIENDO LOCAL BANC</div>
<div class="t" style="left:466.2px;top:462.63px;font-size:11px;line-height:14px;color:#dfe1e5;font-weight:normal;transform:scaleX(0.9285);transform-origin:0 0;-webkit-text-stroke:0.25px #dfe1e5">Amer</div>
<div class="t" style="left:606.3px;top:462.63px;font-size:11px;line-height:14px;color:#ef6446;font-weight:normal;transform:scaleX(0.8853);transform-origin:0 0;-webkit-text-stroke:0.25px #ef6446">Expense</div>
<div class="t" style="left:738.9px;top:462.63px;font-size:11px;line-height:14px;color:#dfe1e5;font-weight:normal;transform:scaleX(0.9963);transform-origin:0 0;-webkit-text-stroke:0.25px #dfe1e5">since-banc</div>
<div class="t" style="left:1275.6px;top:462.63px;font-size:11px;line-height:14px;color:#22b48c;font-weight:normal;transform:scaleX(0.9381);transform-origin:0 0;-webkit-text-stroke:0.25px #22b48c">Active</div>
<svg class="r" style="left:1378px;top:463.04px" width="60" height="13" viewBox="0 0 60 13" overflow="visible"><rect x="1.45" y="1.2" width="8.4" height="8.2" rx="1.2" fill="none" stroke="#e6e8ec" stroke-width="1.5"/>
<path d="M3.3 5.6l1.7 1.6 3.1-3.3" fill="none" stroke="#e6e8ec" stroke-width="1.3"/>
<path d="M18.9 3.3A3.8 3.8 0 1 0 23.1 3.3" fill="none" stroke="#e6e8ec" stroke-width="1.4"/><path d="M21 0.6V5.1" stroke="#e6e8ec" stroke-width="1.4"/>
<path d="M36.2 1.65H32.6Q31.65 1.65 31.65 2.6V9.25Q31.65 10.2 32.6 10.2H40.2Q41.15 10.2 41.15 9.25V5.8" fill="none" stroke="#e6e8ec" stroke-width="1.3"/>
<path d="M34.4 8.1L34.9 6.2L39.8 1.3L41.3 2.8L36.4 7.7Z" fill="none" stroke="#e6e8ec" stroke-width="1.1"/>
<path d="M46.6 2.9H56.35" stroke="#e6e8ec" stroke-width="1.2"/><path d="M49.6 2.9V1.8Q49.6 0.9 50.5 0.9H52.5Q53.4 0.9 53.4 1.8V2.9" fill="none" stroke="#e6e8ec" stroke-width="1.1"/>
<path d="M47.5 3.4V9.9Q47.5 10.9 48.5 10.9H54.5Q55.5 10.9 55.5 9.9V3.4" fill="none" stroke="#e6e8ec" stroke-width="1.2"/><path d="M50 5.1V9M53 5.1V9" stroke="#e6e8ec" stroke-width="0.9"/></svg>
<div class="t" style="left:65.4px;top:495.13px;font-size:10.5px;line-height:13px;color:#dfe1e5;font-weight:normal;transform:scaleX(0.6937);transform-origin:0 0;-webkit-text-stroke:0.2px #dfe1e5">10</div>
<div class="t" style="left:94.2px;top:495.81px;font-size:10px;line-height:12px;color:#dfe1e5;font-weight:normal;transform:scaleX(0.8694);transform-origin:0 0;-webkit-text-stroke:0.25px #dfe1e5">PAGO ARRIENDO LOCAL EFECTIVO</div>
<div class="t" style="left:466.2px;top:494.46px;font-size:11px;line-height:14px;color:#dfe1e5;font-weight:normal;transform:scaleX(0.9285);transform-origin:0 0;-webkit-text-stroke:0.25px #dfe1e5">Amer</div>
<div class="t" style="left:606.3px;top:494.46px;font-size:11px;line-height:14px;color:#ef6446;font-weight:normal;transform:scaleX(0.8853);transform-origin:0 0;-webkit-text-stroke:0.25px #ef6446">Expense</div>
<div class="t" style="left:738.9px;top:494.46px;font-size:11px;line-height:14px;color:#dfe1e5;font-weight:normal;transform:scaleX(0.9965);transform-origin:0 0;-webkit-text-stroke:0.25px #dfe1e5">since-efect</div>
<div class="t" style="left:1275.6px;top:494.46px;font-size:11px;line-height:14px;color:#22b48c;font-weight:normal;transform:scaleX(0.9381);transform-origin:0 0;-webkit-text-stroke:0.25px #22b48c">Active</div>
<svg class="r" style="left:1378px;top:494.87px" width="60" height="13" viewBox="0 0 60 13" overflow="visible"><rect x="1.45" y="1.2" width="8.4" height="8.2" rx="1.2" fill="none" stroke="#e6e8ec" stroke-width="1.5"/>
<path d="M3.3 5.6l1.7 1.6 3.1-3.3" fill="none" stroke="#e6e8ec" stroke-width="1.3"/>
<path d="M18.9 3.3A3.8 3.8 0 1 0 23.1 3.3" fill="none" stroke="#e6e8ec" stroke-width="1.4"/><path d="M21 0.6V5.1" stroke="#e6e8ec" stroke-width="1.4"/>
<path d="M36.2 1.65H32.6Q31.65 1.65 31.65 2.6V9.25Q31.65 10.2 32.6 10.2H40.2Q41.15 10.2 41.15 9.25V5.8" fill="none" stroke="#e6e8ec" stroke-width="1.3"/>
<path d="M34.4 8.1L34.9 6.2L39.8 1.3L41.3 2.8L36.4 7.7Z" fill="none" stroke="#e6e8ec" stroke-width="1.1"/>
<path d="M46.6 2.9H56.35" stroke="#e6e8ec" stroke-width="1.2"/><path d="M49.6 2.9V1.8Q49.6 0.9 50.5 0.9H52.5Q53.4 0.9 53.4 1.8V2.9" fill="none" stroke="#e6e8ec" stroke-width="1.1"/>
<path d="M47.5 3.4V9.9Q47.5 10.9 48.5 10.9H54.5Q55.5 10.9 55.5 9.9V3.4" fill="none" stroke="#e6e8ec" stroke-width="1.2"/><path d="M50 5.1V9M53 5.1V9" stroke="#e6e8ec" stroke-width="0.9"/></svg>
<div class="t" style="left:65.4px;top:526.96px;font-size:10.5px;line-height:13px;color:#dfe1e5;font-weight:normal;transform:scaleX(0.4771);transform-origin:0 0;-webkit-text-stroke:0.2px #dfe1e5">11</div>
<div class="t" style="left:94.2px;top:527.63px;font-size:10px;line-height:12px;color:#dfe1e5;font-weight:normal;transform:scaleX(0.8891);transform-origin:0 0;-webkit-text-stroke:0.25px #dfe1e5">PAGO SEGURIDAD SOCIAL BANCO</div>
<div class="t" style="left:466.2px;top:526.29px;font-size:11px;line-height:14px;color:#dfe1e5;font-weight:normal;transform:scaleX(0.9285);transform-origin:0 0;-webkit-text-stroke:0.25px #dfe1e5">Amer</div>
<div class="t" style="left:606.3px;top:526.29px;font-size:11px;line-height:14px;color:#ef6446;font-weight:normal;transform:scaleX(0.8853);transform-origin:0 0;-webkit-text-stroke:0.25px #ef6446">Expense</div>
<div class="t" style="left:738.9px;top:526.29px;font-size:11px;line-height:14px;color:#dfe1e5;font-weight:normal;transform:scaleX(0.9963);transform-origin:0 0;-webkit-text-stroke:0.25px #dfe1e5">since-banc</div>
<div class="t" style="left:1275.6px;top:526.29px;font-size:11px;line-height:14px;color:#22b48c;font-weight:normal;transform:scaleX(0.9381);transform-origin:0 0;-webkit-text-stroke:0.25px #22b48c">Active</div>
<svg class="r" style="left:1378px;top:526.7px" width="60" height="13" viewBox="0 0 60 13" overflow="visible"><rect x="1.45" y="1.2" width="8.4" height="8.2" rx="1.2" fill="none" stroke="#e6e8ec" stroke-width="1.5"/>
<path d="M3.3 5.6l1.7 1.6 3.1-3.3" fill="none" stroke="#e6e8ec" stroke-width="1.3"/>
<path d="M18.9 3.3A3.8 3.8 0 1 0 23.1 3.3" fill="none" stroke="#e6e8ec" stroke-width="1.4"/><path d="M21 0.6V5.1" stroke="#e6e8ec" stroke-width="1.4"/>
<path d="M36.2 1.65H32.6Q31.65 1.65 31.65 2.6V9.25Q31.65 10.2 32.6 10.2H40.2Q41.15 10.2 41.15 9.25V5.8" fill="none" stroke="#e6e8ec" stroke-width="1.3"/>
<path d="M34.4 8.1L34.9 6.2L39.8 1.3L41.3 2.8L36.4 7.7Z" fill="none" stroke="#e6e8ec" stroke-width="1.1"/>
<path d="M46.6 2.9H56.35" stroke="#e6e8ec" stroke-width="1.2"/><path d="M49.6 2.9V1.8Q49.6 0.9 50.5 0.9H52.5Q53.4 0.9 53.4 1.8V2.9" fill="none" stroke="#e6e8ec" stroke-width="1.1"/>
<path d="M47.5 3.4V9.9Q47.5 10.9 48.5 10.9H54.5Q55.5 10.9 55.5 9.9V3.4" fill="none" stroke="#e6e8ec" stroke-width="1.2"/><path d="M50 5.1V9M53 5.1V9" stroke="#e6e8ec" stroke-width="0.9"/></svg>
<div class="t" style="left:65.4px;top:558.79px;font-size:10.5px;line-height:13px;color:#dfe1e5;font-weight:normal;transform:scaleX(0.6937);transform-origin:0 0;-webkit-text-stroke:0.2px #dfe1e5">12</div>
<div class="t" style="left:94.2px;top:558.12px;font-size:11px;line-height:14px;color:#dfe1e5;font-weight:normal;transform:scaleX(0.9412);transform-origin:0 0;-webkit-text-stroke:0.25px #dfe1e5">Enter rapidisimo</div>
<div class="t" style="left:466.2px;top:558.12px;font-size:11px;line-height:14px;color:#dfe1e5;font-weight:normal;transform:scaleX(0.9279);transform-origin:0 0;-webkit-text-stroke:0.25px #dfe1e5">Meta</div>
<div class="t" style="left:606.3px;top:558.12px;font-size:11px;line-height:14px;color:#ef6446;font-weight:normal;transform:scaleX(0.8853);transform-origin:0 0;-webkit-text-stroke:0.25px #ef6446">Expense</div>
<div class="t" style="left:738.9px;top:559.46px;font-size:10px;line-height:12px;color:#dfe1e5;font-weight:normal;transform:scaleX(0.8832);transform-origin:0 0;-webkit-text-stroke:0.25px #dfe1e5">VVC.CENTRO</div>
<div class="t" style="left:1134.2px;top:558.12px;font-size:11px;line-height:14px;color:#dfe1e5;font-weight:normal;transform:scaleX(0.9513);transform-origin:0 0;-webkit-text-stroke:0.25px #dfe1e5">Ventas</div>
<div class="t" style="left:1275.6px;top:558.12px;font-size:11px;line-height:14px;color:#22b48c;font-weight:normal;transform:scaleX(0.9381);transform-origin:0 0;-webkit-text-stroke:0.25px #22b48c">Active</div>
<svg class="r" style="left:1378px;top:558.53px" width="60" height="13" viewBox="0 0 60 13" overflow="visible"><rect x="1.45" y="1.2" width="8.4" height="8.2" rx="1.2" fill="none" stroke="#e6e8ec" stroke-width="1.5"/>
<path d="M3.3 5.6l1.7 1.6 3.1-3.3" fill="none" stroke="#e6e8ec" stroke-width="1.3"/>
<path d="M18.9 3.3A3.8 3.8 0 1 0 23.1 3.3" fill="none" stroke="#e6e8ec" stroke-width="1.4"/><path d="M21 0.6V5.1" stroke="#e6e8ec" stroke-width="1.4"/>
<path d="M36.2 1.65H32.6Q31.65 1.65 31.65 2.6V9.25Q31.65 10.2 32.6 10.2H40.2Q41.15 10.2 41.15 9.25V5.8" fill="none" stroke="#e6e8ec" stroke-width="1.3"/>
<path d="M34.4 8.1L34.9 6.2L39.8 1.3L41.3 2.8L36.4 7.7Z" fill="none" stroke="#e6e8ec" stroke-width="1.1"/>
<path d="M46.6 2.9H56.35" stroke="#e6e8ec" stroke-width="1.2"/><path d="M49.6 2.9V1.8Q49.6 0.9 50.5 0.9H52.5Q53.4 0.9 53.4 1.8V2.9" fill="none" stroke="#e6e8ec" stroke-width="1.1"/>
<path d="M47.5 3.4V9.9Q47.5 10.9 48.5 10.9H54.5Q55.5 10.9 55.5 9.9V3.4" fill="none" stroke="#e6e8ec" stroke-width="1.2"/><path d="M50 5.1V9M53 5.1V9" stroke="#e6e8ec" stroke-width="0.9"/></svg>
<div class="t" style="left:65.4px;top:590.62px;font-size:10.5px;line-height:13px;color:#dfe1e5;font-weight:normal;transform:scaleX(0.6937);transform-origin:0 0;-webkit-text-stroke:0.2px #dfe1e5">13</div>
<div class="t" style="left:94.2px;top:591.29px;font-size:10px;line-height:12px;color:#dfe1e5;font-weight:normal;transform:scaleX(0.8395);transform-origin:0 0;-webkit-text-stroke:0.25px #dfe1e5">IMPUESTOS EN EFECTIVO</div>
<div class="t" style="left:466.2px;top:589.95px;font-size:11px;line-height:14px;color:#dfe1e5;font-weight:normal;transform:scaleX(0.9285);transform-origin:0 0;-webkit-text-stroke:0.25px #dfe1e5">Amer</div>
<div class="t" style="left:606.3px;top:589.95px;font-size:11px;line-height:14px;color:#ef6446;font-weight:normal;transform:scaleX(0.8853);transform-origin:0 0;-webkit-text-stroke:0.25px #ef6446">Expense</div>
<div class="t" style="left:738.9px;top:589.95px;font-size:11px;line-height:14px;color:#dfe1e5;font-weight:normal;transform:scaleX(0.9965);transform-origin:0 0;-webkit-text-stroke:0.25px #dfe1e5">since-efect</div>
<div class="t" style="left:1275.6px;top:589.95px;font-size:11px;line-height:14px;color:#22b48c;font-weight:normal;transform:scaleX(0.9381);transform-origin:0 0;-webkit-text-stroke:0.25px #22b48c">Active</div>
<svg class="r" style="left:1378px;top:590.36px" width="60" height="13" viewBox="0 0 60 13" overflow="visible"><rect x="1.45" y="1.2" width="8.4" height="8.2" rx="1.2" fill="none" stroke="#e6e8ec" stroke-width="1.5"/>
<path d="M3.3 5.6l1.7 1.6 3.1-3.3" fill="none" stroke="#e6e8ec" stroke-width="1.3"/>
<path d="M18.9 3.3A3.8 3.8 0 1 0 23.1 3.3" fill="none" stroke="#e6e8ec" stroke-width="1.4"/><path d="M21 0.6V5.1" stroke="#e6e8ec" stroke-width="1.4"/>
<path d="M36.2 1.65H32.6Q31.65 1.65 31.65 2.6V9.25Q31.65 10.2 32.6 10.2H40.2Q41.15 10.2 41.15 9.25V5.8" fill="none" stroke="#e6e8ec" stroke-width="1.3"/>
<path d="M34.4 8.1L34.9 6.2L39.8 1.3L41.3 2.8L36.4 7.7Z" fill="none" stroke="#e6e8ec" stroke-width="1.1"/>
<path d="M46.6 2.9H56.35" stroke="#e6e8ec" stroke-width="1.2"/><path d="M49.6 2.9V1.8Q49.6 0.9 50.5 0.9H52.5Q53.4 0.9 53.4 1.8V2.9" fill="none" stroke="#e6e8ec" stroke-width="1.1"/>
<path d="M47.5 3.4V9.9Q47.5 10.9 48.5 10.9H54.5Q55.5 10.9 55.5 9.9V3.4" fill="none" stroke="#e6e8ec" stroke-width="1.2"/><path d="M50 5.1V9M53 5.1V9" stroke="#e6e8ec" stroke-width="0.9"/></svg>
<div class="t" style="left:65.4px;top:622.45px;font-size:10.5px;line-height:13px;color:#dfe1e5;font-weight:normal;transform:scaleX(0.6937);transform-origin:0 0;-webkit-text-stroke:0.2px #dfe1e5">14</div>
<div class="t" style="left:94.2px;top:621.78px;font-size:11px;line-height:14px;color:#dfe1e5;font-weight:normal;transform:scaleX(0.9453);transform-origin:0 0;-webkit-text-stroke:0.25px #dfe1e5">Transferencia</div>
<div class="t" style="left:466.2px;top:621.78px;font-size:11px;line-height:14px;color:#dfe1e5;font-weight:normal;transform:scaleX(0.9446);transform-origin:0 0;-webkit-text-stroke:0.25px #dfe1e5">Barcelona</div>
<div class="t" style="left:606.3px;top:621.78px;font-size:11px;line-height:14px;color:#ef6446;font-weight:normal;transform:scaleX(0.8853);transform-origin:0 0;-webkit-text-stroke:0.25px #ef6446">Expense</div>
<div class="t" style="left:738.9px;top:621.78px;font-size:11px;line-height:14px;color:#dfe1e5;font-weight:normal;transform:scaleX(0.9413);transform-origin:0 0;-webkit-text-stroke:0.25px #dfe1e5">Vup.Centro</div>
<div class="t" style="left:1275.6px;top:621.78px;font-size:11px;line-height:14px;color:#22b48c;font-weight:normal;transform:scaleX(0.9381);transform-origin:0 0;-webkit-text-stroke:0.25px #22b48c">Active</div>
<svg class="r" style="left:1378px;top:622.19px" width="60" height="13" viewBox="0 0 60 13" overflow="visible"><rect x="1.45" y="1.2" width="8.4" height="8.2" rx="1.2" fill="none" stroke="#e6e8ec" stroke-width="1.5"/>
<path d="M3.3 5.6l1.7 1.6 3.1-3.3" fill="none" stroke="#e6e8ec" stroke-width="1.3"/>
<path d="M18.9 3.3A3.8 3.8 0 1 0 23.1 3.3" fill="none" stroke="#e6e8ec" stroke-width="1.4"/><path d="M21 0.6V5.1" stroke="#e6e8ec" stroke-width="1.4"/>
<path d="M36.2 1.65H32.6Q31.65 1.65 31.65 2.6V9.25Q31.65 10.2 32.6 10.2H40.2Q41.15 10.2 41.15 9.25V5.8" fill="none" stroke="#e6e8ec" stroke-width="1.3"/>
<path d="M34.4 8.1L34.9 6.2L39.8 1.3L41.3 2.8L36.4 7.7Z" fill="none" stroke="#e6e8ec" stroke-width="1.1"/>
<path d="M46.6 2.9H56.35" stroke="#e6e8ec" stroke-width="1.2"/><path d="M49.6 2.9V1.8Q49.6 0.9 50.5 0.9H52.5Q53.4 0.9 53.4 1.8V2.9" fill="none" stroke="#e6e8ec" stroke-width="1.1"/>
<path d="M47.5 3.4V9.9Q47.5 10.9 48.5 10.9H54.5Q55.5 10.9 55.5 9.9V3.4" fill="none" stroke="#e6e8ec" stroke-width="1.2"/><path d="M50 5.1V9M53 5.1V9" stroke="#e6e8ec" stroke-width="0.9"/></svg>
<div class="t" style="left:65.4px;top:654.28px;font-size:10.5px;line-height:13px;color:#dfe1e5;font-weight:normal;transform:scaleX(0.6937);transform-origin:0 0;-webkit-text-stroke:0.2px #dfe1e5">15</div>
<div class="t" style="left:94.2px;top:654.95px;font-size:10px;line-height:12px;color:#dfe1e5;font-weight:normal;transform:scaleX(0.8632);transform-origin:0 0;-webkit-text-stroke:0.25px #dfe1e5">PAGOS INTERRAPIDISIMO</div>
<div class="t" style="left:466.2px;top:653.61px;font-size:11px;line-height:14px;color:#dfe1e5;font-weight:normal;transform:scaleX(0.9125);transform-origin:0 0;-webkit-text-stroke:0.25px #dfe1e5">Kasper</div>
<div class="t" style="left:606.3px;top:653.61px;font-size:11px;line-height:14px;color:#22b48c;font-weight:normal;transform:scaleX(0.9745);transform-origin:0 0;-webkit-text-stroke:0.25px #22b48c">Incoming</div>
<div class="t" style="left:936.0px;top:653.61px;font-size:11px;line-height:14px;color:#dfe1e5;font-weight:normal;transform:scaleX(0.9675);transform-origin:0 0;-webkit-text-stroke:0.25px #dfe1e5">Doradal banc</div>
<div class="t" style="left:1275.6px;top:653.61px;font-size:11px;line-height:14px;color:#22b48c;font-weight:normal;transform:scaleX(0.9381);transform-origin:0 0;-webkit-text-stroke:0.25px #22b48c">Active</div>
<svg class="r" style="left:1378px;top:654.02px" width="60" height="13" viewBox="0 0 60 13" overflow="visible"><rect x="1.45" y="1.2" width="8.4" height="8.2" rx="1.2" fill="none" stroke="#e6e8ec" stroke-width="1.5"/>
<path d="M3.3 5.6l1.7 1.6 3.1-3.3" fill="none" stroke="#e6e8ec" stroke-width="1.3"/>
<path d="M18.9 3.3A3.8 3.8 0 1 0 23.1 3.3" fill="none" stroke="#e6e8ec" stroke-width="1.4"/><path d="M21 0.6V5.1" stroke="#e6e8ec" stroke-width="1.4"/>
<path d="M36.2 1.65H32.6Q31.65 1.65 31.65 2.6V9.25Q31.65 10.2 32.6 10.2H40.2Q41.15 10.2 41.15 9.25V5.8" fill="none" stroke="#e6e8ec" stroke-width="1.3"/>
<path d="M34.4 8.1L34.9 6.2L39.8 1.3L41.3 2.8L36.4 7.7Z" fill="none" stroke="#e6e8ec" stroke-width="1.1"/>
<path d="M46.6 2.9H56.35" stroke="#e6e8ec" stroke-width="1.2"/><path d="M49.6 2.9V1.8Q49.6 0.9 50.5 0.9H52.5Q53.4 0.9 53.4 1.8V2.9" fill="none" stroke="#e6e8ec" stroke-width="1.1"/>
<path d="M47.5 3.4V9.9Q47.5 10.9 48.5 10.9H54.5Q55.5 10.9 55.5 9.9V3.4" fill="none" stroke="#e6e8ec" stroke-width="1.2"/><path d="M50 5.1V9M53 5.1V9" stroke="#e6e8ec" stroke-width="0.9"/></svg>
<div class="t" style="left:57.5px;top:694.5px;font-size:10.2px;line-height:12px;color:#e2e4e8;-webkit-text-stroke:0.3px #e2e4e8;letter-spacing:0.15px">Total <span style="color:#ff1a1a;-webkit-text-stroke:0.3px #ff1a1a">583</span> Items</div>
<div class="r" style="left:1340.5px;top:689px;width:196.5px;height:24px;background:transparent;border:1px solid #34373c;border-radius:4px;box-sizing:border-box"></div>
<div class="r" style="left:1364px;top:689px;width:21px;height:24px;background:#40518c;"></div>
<div class="r" style="left:1408px;top:690px;width:1px;height:22px;background:#34373c;"></div>
<div class="r" style="left:1431px;top:690px;width:1px;height:22px;background:#34373c;"></div>
<div class="r" style="left:1455px;top:690px;width:1px;height:22px;background:#34373c;"></div>
<div class="r" style="left:1484px;top:690px;width:1px;height:22px;background:#34373c;"></div>
<div class="r" style="left:1513px;top:690px;width:1px;height:22px;background:#34373c;"></div>
<div class="r" style="left:1441px;top:703px;width:5.5px;height:1px;background:#8d939c;"></div>
<div class="t" style="left:1340.5px;width:23.5px;top:694px;text-align:center;font-size:10px;line-height:14px;color:#dfe1e5;-webkit-text-stroke:0.25px #dfe1e5">‹</div>
<div class="t" style="left:1364.0px;width:21.0px;top:694px;text-align:center;font-size:10px;line-height:14px;color:#fff;-webkit-text-stroke:0.25px #fff">1</div>
<div class="t" style="left:1385.0px;width:23.0px;top:694px;text-align:center;font-size:10px;line-height:14px;color:#dfe1e5;-webkit-text-stroke:0.25px #dfe1e5">2</div>
<div class="t" style="left:1408.0px;width:23.0px;top:694px;text-align:center;font-size:10px;line-height:14px;color:#dfe1e5;-webkit-text-stroke:0.25px #dfe1e5">3</div>
<div class="t" style="left:1455.0px;width:29.0px;top:694px;text-align:center;font-size:10px;line-height:14px;color:#dfe1e5;-webkit-text-stroke:0.25px #dfe1e5">37</div>
<div class="t" style="left:1484.0px;width:29.0px;top:694px;text-align:center;font-size:10px;line-height:14px;color:#dfe1e5;-webkit-text-stroke:0.25px #dfe1e5">38</div>
<div class="t" style="left:1513.0px;width:23.5px;top:694px;text-align:center;font-size:10px;line-height:14px;color:#dfe1e5;-webkit-text-stroke:0.25px #dfe1e5">›</div>
</body></html>
